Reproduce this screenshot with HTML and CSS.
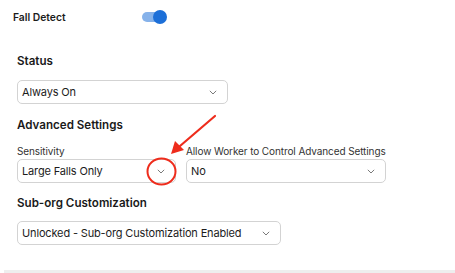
FILE: index.html
```html
<html>
    <head>
        <link rel="stylesheet" href="styles.css">
    </head>
    <body>
        <div class="toggle-row">
            <div class="toggle-label">Fall Detect</div>
            <div class="switch">
                <div class="track"></div>
                <div class="knob"></div>
            </div>
        </div>
        <div class="panel">
            <h3 class="first">Status</h3>
            <div class="select status-select">
                <span>Always On</span>
                <svg class="chev" width="8" height="5" viewBox="0 0 8 5"><path d="M0.8 0.8l3.2 3.2 3.2-3.2" fill="none" stroke="#7a7a7a" stroke-width="1"/></svg>
            </div>

            <h3>Advanced Settings</h3>
            <div class="fields">
                <div class="field">
                    <label>Sensitivity</label>
                    <div class="select sens-select">
                        <span>Large Falls Only</span>
                        <svg class="chev" width="8" height="5" viewBox="0 0 8 5"><path d="M0.8 0.8l3.2 3.2 3.2-3.2" fill="none" stroke="#7a7a7a" stroke-width="1"/></svg>
                    </div>
                </div>
                <div class="field">
                    <label>Allow Worker to Control Advanced Settings</label>
                    <div class="select worker-select">
                        <span>No</span>
                        <svg class="chev" width="8" height="5" viewBox="0 0 8 5"><path d="M0.8 0.8l3.2 3.2 3.2-3.2" fill="none" stroke="#7a7a7a" stroke-width="1"/></svg>
                    </div>
                </div>
            </div>

            <h3>Sub-org Customization</h3>
            <div class="select suborg-select">
                <span>Unlocked - Sub-org Customization Enabled</span>
                <svg class="chev" width="8" height="5" viewBox="0 0 8 5"><path d="M0.8 0.8l3.2 3.2 3.2-3.2" fill="none" stroke="#7a7a7a" stroke-width="1"/></svg>
            </div>
        </div>
        <div class="footer-line"></div>

        <!-- red annotation drawn over the screenshot -->
        <svg class="annotation" width="455" height="273" viewBox="0 0 455 273">
            <line x1="215" y1="116" x2="180" y2="146" stroke="#ee2c1c" stroke-width="2.2" stroke-linecap="round"/>
            <path d="M171 154 L175 141 L184 150 Z" fill="#ee2c1c"/>
            <ellipse cx="161.5" cy="171.5" rx="14" ry="13" fill="none" stroke="#ee2c1c" stroke-width="2"/>
        </svg>
    </body>
</html>
```

FILE: styles.css
```css
body{
    font-family: Inter, "Noto Sans", sans-serif;
    margin: 0;
    padding: 0;
    width: 455px;
    height: 273px;
    background: #fff;
    color: #1c1c1c;
    position: relative;
    overflow: hidden;
}
.toggle-row{
    display: flex;
    align-items: center;
    padding: 10px 0 0 13px;
    height: 14px;
}
.toggle-label{
    font-size: 10.3px;
    font-weight: 600;
    width: 129px;
}
.switch{
    position: relative;
    width: 26px;
    height: 14px;
}
.track{
    position: absolute;
    left: 0;
    top: 2px;
    width: 22px;
    height: 10px;
    border-radius: 5px;
    background: #86b2ea;
}
.knob{
    position: absolute;
    left: 11px;
    top: 0;
    width: 14px;
    height: 14px;
    border-radius: 50%;
    background: #1c6fd8;
}
.panel{
    padding: 0 0 0 17px;
}
h3{
    font-size: 11.6px;
    font-weight: 600;
    margin: 0;
    color: #1a1a1a;
}
h3.first{
    margin-top: 30px;
    margin-bottom: 12px;
}
.select{
    display: flex;
    align-items: center;
    justify-content: space-between;
    box-sizing: border-box;
    height: 24px;
    border: 1px solid #d3d3d3;
    border-radius: 5px;
    padding: 0 10px 0 4px;
    font-size: 11px;
    letter-spacing: -0.15px;
    color: #1c1c1c;
}
.status-select{
    width: 211px;
    margin-bottom: 14px;
}
.fields{
    display: flex;
    gap: 10px;
    margin-top: 13px;
    margin-bottom: 13px;
}
.field label{
    display: block;
    font-size: 10px;
    letter-spacing: -0.1px;
    color: #333;
    margin-bottom: 2px;
}
.sens-select{
    width: 159px;
}
.worker-select{
    width: 200px;
}
.suborg-select{
    width: 264px;
    margin-top: 11px;
}
.footer-line{
    position: absolute;
    left: 4px;
    right: 0;
    bottom: 0;
    height: 3px;
    background: #eeeeee;
}
.annotation{
    position: absolute;
    left: 0;
    top: 0;
    pointer-events: none;
}
```
